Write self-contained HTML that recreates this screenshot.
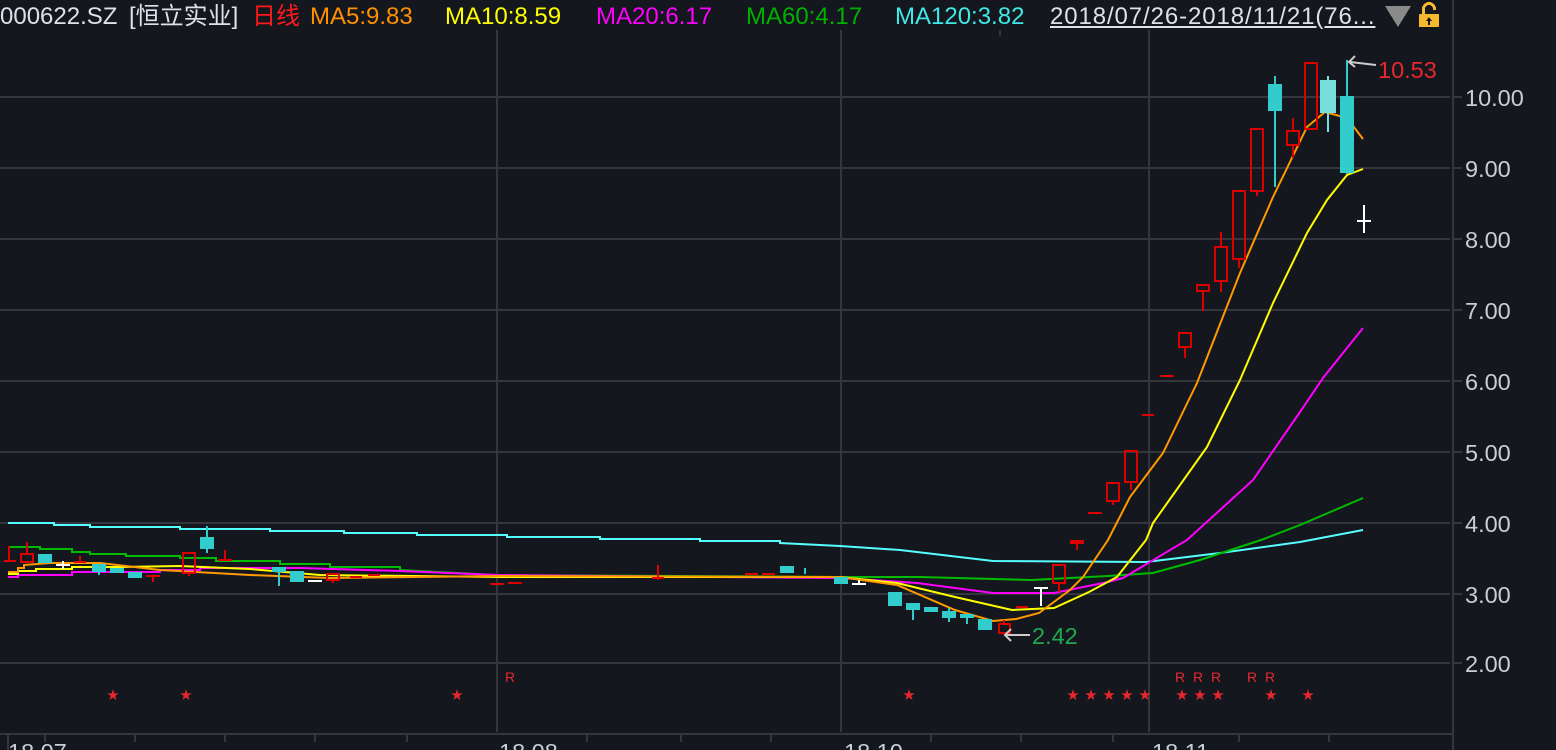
<!DOCTYPE html>
<html><head><meta charset="utf-8"><style>
html,body{margin:0;padding:0;background:#14171d;width:1556px;height:750px;overflow:hidden}
svg{position:absolute;left:0;top:0}
.h{position:absolute;top:2px;font:24px "Liberation Sans","Noto Sans CJK SC",sans-serif;white-space:nowrap;line-height:30px}
</style></head><body>
<svg width="1556" height="750" xmlns="http://www.w3.org/2000/svg" shape-rendering="crispEdges">
<g stroke="#34363b" stroke-width="2">
<line x1="0" y1="97" x2="1450" y2="97"/><line x1="0" y1="168" x2="1450" y2="168"/><line x1="0" y1="239" x2="1450" y2="239"/><line x1="0" y1="310" x2="1450" y2="310"/><line x1="0" y1="381" x2="1450" y2="381"/><line x1="0" y1="452" x2="1450" y2="452"/><line x1="0" y1="523" x2="1450" y2="523"/><line x1="0" y1="594" x2="1450" y2="594"/><line x1="0" y1="663" x2="1450" y2="663"/>
<line x1="497" y1="30" x2="497" y2="732"/><line x1="841" y1="30" x2="841" y2="732"/><line x1="1149" y1="30" x2="1149" y2="732"/>
<line x1="1453" y1="0" x2="1453" y2="750"/>
<line x1="0" y1="734" x2="1453" y2="734"/>
<line x1="1454" y1="97" x2="1462" y2="97"/><line x1="1454" y1="168" x2="1462" y2="168"/><line x1="1454" y1="239" x2="1462" y2="239"/><line x1="1454" y1="310" x2="1462" y2="310"/><line x1="1454" y1="381" x2="1462" y2="381"/><line x1="1454" y1="452" x2="1462" y2="452"/><line x1="1454" y1="523" x2="1462" y2="523"/><line x1="1454" y1="594" x2="1462" y2="594"/><line x1="1454" y1="663" x2="1462" y2="663"/>
<line x1="8" y1="734" x2="8" y2="750"/><line x1="45" y1="734" x2="45" y2="742"/><line x1="135" y1="734" x2="135" y2="742"/><line x1="225" y1="734" x2="225" y2="742"/><line x1="315" y1="734" x2="315" y2="742"/><line x1="407" y1="734" x2="407" y2="742"/><line x1="587" y1="734" x2="587" y2="742"/><line x1="681" y1="734" x2="681" y2="742"/><line x1="771" y1="734" x2="771" y2="742"/><line x1="931" y1="734" x2="931" y2="742"/><line x1="1021" y1="734" x2="1021" y2="742"/><line x1="1113" y1="734" x2="1113" y2="742"/><line x1="1239" y1="734" x2="1239" y2="742"/><line x1="1329" y1="734" x2="1329" y2="742"/>
<line x1="1000" y1="30" x2="1000" y2="36"/>
</g>
<g fill="none" stroke-width="2" shape-rendering="auto">
<polyline stroke="#5ff" points="8,523 54,523 54,525 90,525 90,527 180,527 180,529 270,529 270,531 344,531 344,533 417,533 417,535 507,535 507,537 600,537 600,539 700,539 700,541 780,541 780,543 840,546 900,550 993,561 1146,562 1220,553 1300,542 1363,530"/>
<polyline stroke="#0b0" points="8,547 40,547 40,549 72,549 72,552 90,552 90,554 126,554 126,556 180,556 180,558 216,558 216,561 280,561 280,564 330,564 330,567 400,567 400,570 497,575 840,577 920,577 1031,580 1108,576 1153,573 1200,560 1261,540 1300,525 1363,498"/>
<polyline stroke="#f0f" points="8,577 18,577 18,575 72,575 72,572 160,572 160,570 200,570 200,568 300,568 400,571 497,575 840,578 917,583 993,593 1054,593 1108,582 1123,578 1187,540 1253,480 1300,412 1323,378 1363,328"/>
<polyline stroke="#ff0" points="8,574 18,574 18,571 36,571 36,569 72,569 72,567 120,567 180,566 250,569 320,575 500,577 840,577 897,583 955,597 1012,610 1054,608 1089,592 1117,577 1146,540 1153,523 1207,447 1240,380 1273,303 1307,233 1327,200 1347,175 1363,169"/>
<polyline stroke="#f90" points="8,572 18,572 18,568 24,568 24,565 50,563 100,563 160,570 250,575 330,578 500,576 840,577 897,585 955,610 993,621 1016,619 1039,613 1070,590 1083,577 1108,540 1130,497 1163,453 1197,383 1240,273 1273,197 1307,127 1325,112 1347,118 1363,139"/>
</g>
<g fill="none" stroke="#d00" stroke-width="2">
<rect x="21" y="554" width="12" height="8"/><line x1="27" y1="542" x2="27" y2="554"/>
<line x1="4" y1="561" x2="16" y2="561"/><line x1="9" y1="546" x2="9" y2="562"/>
<line x1="74" y1="562" x2="86" y2="562"/><line x1="80" y1="556" x2="80" y2="562"/>
<line x1="146" y1="576" x2="160" y2="576"/><line x1="153" y1="576" x2="153" y2="582"/>
<rect x="183" y="553" width="12" height="20"/><line x1="189" y1="573" x2="189" y2="576"/>
<line x1="218" y1="560" x2="232" y2="560"/><line x1="225" y1="550" x2="225" y2="560"/>
<rect x="327" y="574" width="12" height="6"/><line x1="333" y1="580" x2="333" y2="583"/>
<line x1="350" y1="577" x2="362" y2="577"/><line x1="368" y1="575" x2="380" y2="575"/>
<line x1="490" y1="584" x2="504" y2="584"/><line x1="508" y1="583" x2="522" y2="583"/>
<line x1="658" y1="565" x2="658" y2="580"/><line x1="652" y1="578" x2="664" y2="578"/>
<line x1="745" y1="574" x2="758" y2="574"/><line x1="762" y1="574" x2="775" y2="574"/>
<rect x="999" y="624" width="11" height="9"/><line x1="1004" y1="620" x2="1004" y2="624"/>
<line x1="1016" y1="607" x2="1028" y2="607"/>
<rect x="1053" y="565" width="12" height="18"/><line x1="1059" y1="583" x2="1059" y2="592"/>
<rect x="1071" y="541" width="12" height="2"/><line x1="1077" y1="543" x2="1077" y2="550"/>
<line x1="1088" y1="513" x2="1102" y2="513"/>
<rect x="1107" y="483" width="12" height="18"/><line x1="1113" y1="501" x2="1113" y2="505"/>
<rect x="1125" y="451" width="12" height="31"/><line x1="1131" y1="482" x2="1131" y2="490"/>
<line x1="1142" y1="415" x2="1154" y2="415"/>
<line x1="1160" y1="376" x2="1174" y2="376"/>
<rect x="1179" y="333" width="12" height="14"/><line x1="1185" y1="347" x2="1185" y2="358"/>
<rect x="1197" y="285" width="12" height="6"/><line x1="1203" y1="291" x2="1203" y2="311"/>
<rect x="1215" y="247" width="12" height="34"/><line x1="1221" y1="232" x2="1221" y2="247"/><line x1="1221" y1="281" x2="1221" y2="292"/>
<rect x="1233" y="191" width="12" height="68"/><line x1="1239" y1="259" x2="1239" y2="268"/>
<rect x="1251" y="129" width="12" height="62"/><line x1="1257" y1="191" x2="1257" y2="196"/>
<rect x="1287" y="131" width="12" height="14"/><line x1="1293" y1="118" x2="1293" y2="131"/><line x1="1293" y1="145" x2="1293" y2="158"/>
<rect x="1305" y="63" width="12" height="66"/>
</g>
<g fill="#3cc" stroke="#3cc" stroke-width="2">
<rect x="39" y="555" width="12" height="7"/>
<rect x="93" y="565" width="12" height="6"/><line x1="99" y1="571" x2="99" y2="575"/>
<rect x="111" y="569" width="12" height="3"/>
<rect x="129" y="573" width="12" height="4"/>
<rect x="201" y="538" width="12" height="10"/><line x1="207" y1="526" x2="207" y2="553"/>
<rect x="273" y="568" width="12" height="3"/><line x1="279" y1="571" x2="279" y2="586"/>
<rect x="291" y="572" width="12" height="9"/>
<rect x="781" y="567" width="12" height="5"/><line x1="805" y1="568" x2="805" y2="574"/>
<rect x="835" y="578" width="12" height="5"/>
<rect x="889" y="593" width="12" height="12"/>
<rect x="907" y="604" width="12" height="5"/><line x1="913" y1="609" x2="913" y2="620"/>
<rect x="925" y="608" width="12" height="3"/>
<rect x="943" y="612" width="12" height="5"/><line x1="949" y1="608" x2="949" y2="622"/>
<rect x="961" y="615" width="12" height="2"/><line x1="967" y1="617" x2="967" y2="624"/>
<rect x="979" y="620" width="12" height="9"/>
<rect x="1269" y="85" width="12" height="25"/><line x1="1275" y1="76" x2="1275" y2="187"/>
<rect x="1341" y="97" width="12" height="75"/><line x1="1347" y1="60" x2="1347" y2="174"/>
</g>
<g fill="#7dd" stroke="#7dd" stroke-width="2"><rect x="1321" y="81" width="14" height="31"/><line x1="1328" y1="76" x2="1328" y2="132"/></g>
<g stroke="#fff" stroke-width="2">
<line x1="56" y1="565" x2="70" y2="565"/><line x1="63" y1="561" x2="63" y2="569"/>
<line x1="308" y1="581" x2="322" y2="581"/>
<line x1="852" y1="584" x2="866" y2="584"/><line x1="859" y1="580" x2="859" y2="585"/>
<line x1="1034" y1="588" x2="1048" y2="588"/><line x1="1041" y1="588" x2="1041" y2="606"/>
<line x1="1364" y1="205" x2="1364" y2="233"/><line x1="1357" y1="221" x2="1371" y2="221"/>
</g>
<g stroke="#ccc" stroke-width="2" fill="none" shape-rendering="auto">
<line x1="1350" y1="62" x2="1376" y2="65"/><polyline points="1355,56 1349,62 1355,67"/>
<line x1="1006" y1="635" x2="1030" y2="635"/><polyline points="1011,629 1005,635 1011,641"/>
</g>
<g fill="#e8262e" font-family="Liberation Sans,sans-serif" font-size="15" text-anchor="middle">
<text x="113" y="700">★</text><text x="186" y="700">★</text><text x="457" y="700">★</text><text x="909" y="700">★</text><text x="1073" y="700">★</text><text x="1091" y="700">★</text><text x="1109" y="700">★</text><text x="1127" y="700">★</text><text x="1145" y="700">★</text><text x="1182" y="700">★</text><text x="1200" y="700">★</text><text x="1218" y="700">★</text><text x="1271" y="700">★</text><text x="1308" y="700">★</text>
<text x="510" y="682" font-size="14">R</text><text x="1180" y="682" font-size="14">R</text><text x="1198" y="682" font-size="14">R</text><text x="1216" y="682" font-size="14">R</text><text x="1252" y="682" font-size="14">R</text><text x="1270" y="682" font-size="14">R</text>
</g>
<g font-family="Liberation Sans,sans-serif" font-size="23.5" fill="#c9cdd6">
<text x="1465" y="106">10.00</text><text x="1465" y="177">9.00</text><text x="1465" y="248">8.00</text><text x="1465" y="319">7.00</text><text x="1465" y="390">6.00</text><text x="1465" y="461">5.00</text><text x="1465" y="532">4.00</text><text x="1465" y="603">3.00</text><text x="1465" y="672">2.00</text>
<text x="8" y="760">18.07</text><text x="499" y="760">18.08</text><text x="844" y="760">18.10</text><text x="1152" y="760">18.11</text>
<text x="1378" y="78" fill="#e8262e">10.53</text>
<text x="1032" y="644" fill="#20a850">2.42</text>
</g>
<polygon points="1385,6 1411,6 1398,27" fill="#8a8a8a"/>
<g fill="#f5b82e"><path d="M1422 14 v-5 a7 7 0 0 1 14 0 v1 h-3 v-1 a4 4 0 0 0 -8 0 v5z"/><rect x="1419" y="14" width="20" height="13" rx="1"/></g>
<path d="M1429 17 l-3 4 h2 v4 h2 v-4 h2z" fill="#14171d"/>
</svg>
<div class="h" style="left:0;color:#dde2ea">000622.SZ</div>
<div class="h" style="left:129px;color:#dde2ea">[恒立实业]</div>
<div class="h" style="left:252px;color:#ff1a1a">日线</div>
<div class="h" style="left:310px;color:#ff9000">MA5:9.83</div>
<div class="h" style="left:445px;color:#ffff00">MA10:8.59</div>
<div class="h" style="left:596px;color:#ff00ff">MA20:6.17</div>
<div class="h" style="left:746px;color:#00b000">MA60:4.17</div>
<div class="h" style="left:895px;color:#40e8e8">MA120:3.82</div>
<div class="h" style="left:1050px;color:#dde2ea;text-decoration:underline;letter-spacing:0.9px">2018/07/26-2018/11/21(76...</div>
</body></html>
